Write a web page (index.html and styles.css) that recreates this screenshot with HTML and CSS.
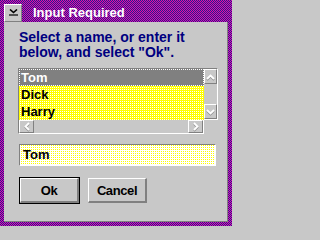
FILE: index.html
```html
<!DOCTYPE html>
<html>
<head>
<meta charset="utf-8">
<link rel="stylesheet" href="styles.css">
</head>
<body>
<div class="window">
  <div class="titlebar">
    <div class="sysmenu">
      <svg width="9" height="7" viewBox="0 0 9 7"><polyline points="1,0.5 4.5,3.5 8,0.5" fill="none" stroke="#000" stroke-width="1.6"/><line x1="0" y1="6" x2="9" y2="6" stroke="#000" stroke-width="1.2"/></svg>
    </div>
    <div class="title">Input Required</div>
  </div>
  <div class="client">
    <p class="prompt">Select a name, or enter it<br>below, and select "Ok".</p>
    <div class="lb-main">
      <div class="list">
        <div class="item sel">Tom</div>
        <div class="item">Dick</div>
        <div class="item">Harry</div>
      </div>
      <div class="vscroll">
        <div class="sbtn v"><svg width="9" height="6" viewBox="0 0 9 6"><polyline points="1,5 4.5,1.5 8,5" fill="none" stroke="#fff" stroke-width="1.8"/></svg></div>
        <div class="sbtn v"><svg width="9" height="6" viewBox="0 0 9 6"><polyline points="1,1 4.5,4.5 8,1" fill="none" stroke="#fff" stroke-width="1.8"/></svg></div>
      </div>
    </div>
    <div class="lb-bottom">
      <div class="sbtn h"><svg width="6" height="9" viewBox="0 0 6 9"><polyline points="5,1 1.5,4.5 5,8" fill="none" stroke="#fff" stroke-width="1.8"/></svg></div>
      <div class="sbtn h"><svg width="6" height="9" viewBox="0 0 6 9"><polyline points="1,1 4.5,4.5 1,8" fill="none" stroke="#fff" stroke-width="1.8"/></svg></div>
    </div>
    <div class="entry">Tom</div>
    <div class="buttons">
      <div class="default"><div class="btn">Ok</div></div>
      <div class="btn">Cancel</div>
    </div>
  </div>
</div>
</body>
</html>
```
FILE: styles.css
```css
* { box-sizing: border-box; }
html, body { margin: 0; padding: 0; }
body {
  background: #c8c8c8;
  width: 233px;
  height: 227px;
  overflow: hidden;
  font-family: "Liberation Sans", Arial, sans-serif;
  font-weight: bold;
}
.window {
  width: 232px;
  height: 226px;
  padding: 4px;
  background: repeating-conic-gradient(#e010a8 0 25%, #2c1890 0 50%) 0 0 / 2px 2px;
  display: flex;
  flex-direction: column;
}
.titlebar {
  height: 18px;
  display: flex;
  align-items: center;
}
.sysmenu {
  width: 18px;
  height: 18px;
  background: #c8c8c8;
  border-top: 1px solid #fff;
  border-left: 1px solid #fff;
  border-right: 1px solid #808080;
  border-bottom: 1px solid #808080;
  display: flex;
  align-items: center;
  justify-content: center;
  padding-bottom: 2px;
}
.title {
  color: #fff;
  font-size: 13px;
  line-height: 18px;
  margin-left: 11px;
}
.client {
  height: 200px;
  background: #c8c8c8;
  border-right: 1px solid #808080;
  border-bottom: 1px solid #808080;
  padding: 8px 0 0 14px;
}
.prompt {
  color: #000080;
  font-size: 14px;
  line-height: 15px;
  margin: 0 0 0 1px;
}
.lb-main {
  display: flex;
  width: 200px;
  margin-top: 8px;
  border-top: 1px solid #808080;
  border-left: 1px solid #808080;
  border-right: 1px solid #fff;
}
.list {
  width: 185px;
  height: 51px;
  overflow: hidden;
  background: repeating-conic-gradient(#fff 0 25%, #ffff00 0 100%) 0 0 / 2px 2px;
}
.item {
  height: 17px;
  line-height: 17px;
  font-size: 13px;
  padding-left: 2px;
  color: #000;
}
.item.sel {
  background: #808080;
  color: #fff;
  outline: 1px dotted #fff;
  outline-offset: -1px;
}
.vscroll {
  width: 13px;
  height: 51px;
  display: flex;
  flex-direction: column;
  justify-content: space-between;
  border-bottom: 1px solid #fff;
}
.sbtn {
  background: #c8c8c8;
  border-top: 1px solid #fff;
  border-left: 1px solid #fff;
  border-right: 1px solid #808080;
  border-bottom: 1px solid #808080;
  display: flex;
  align-items: center;
  justify-content: center;
}
.sbtn svg { filter: drop-shadow(0 1px 0 #909090); }
.sbtn.v { height: 15px; width: 13px; }
.lb-bottom {
  display: flex;
  justify-content: space-between;
  width: 186px;
  height: 14px;
  border-left: 1px solid #808080;
  border-right: 1px solid #fff;
  border-bottom: 1px solid #fff;
}
.sbtn.h { width: 15px; height: 13px; }
.entry {
  margin: 10px 0 0 1px;
  width: 197px;
  height: 22px;
  border-top: 1px solid #808080;
  border-left: 1px solid #808080;
  border-right: 1px solid #fff;
  border-bottom: 1px solid #fff;
  padding-left: 3px;
  font-size: 13px;
  line-height: 20px;
  color: #000;
  background: repeating-conic-gradient(#ffff00 0 25%, #fff 0 100%) 0 0 / 2px 2px;
}
.buttons {
  display: flex;
  align-items: center;
  gap: 8px;
  margin: 11px 0 0 1px;
}
.default {
  border: 1px solid #000;
}
.btn {
  width: 59px;
  height: 25px;
  background: #c8c8c8;
  border-top: 1px solid #fff;
  border-left: 1px solid #fff;
  border-right: 2px solid #808080;
  border-bottom: 2px solid #808080;
  display: flex;
  align-items: center;
  justify-content: center;
  font-size: 13px;
  letter-spacing: -0.4px;
  color: #000;
}
```
